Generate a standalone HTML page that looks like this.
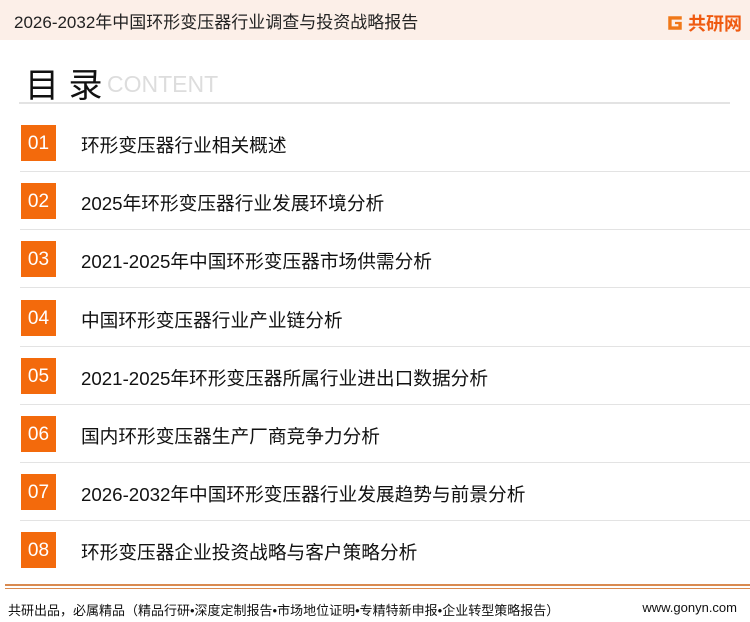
<!DOCTYPE html>
<html><head><meta charset="utf-8"><style>
*{margin:0;padding:0;box-sizing:border-box}
body{width:750px;height:622px;overflow:hidden;background:#fff;font-family:"Liberation Sans","Noto Sans CJK SC",sans-serif;position:relative;color:#111}
.hdr{position:absolute;left:0;top:0;width:750px;height:40px;background:#fcefe8}
.hdr .t{position:absolute;left:14px;top:8px;font-size:17px;color:#222}
.logo{position:absolute;left:666px;top:10px;display:flex;align-items:center}
.logo span{font-size:18px;font-weight:bold;color:#ef5a10;margin-left:4px}
.h1{position:absolute;left:25px;top:58px;font-size:34px;color:#111;white-space:pre}
.ce{position:absolute;left:107px;top:71px;font-size:23px;color:#ddd}
.hl{position:absolute;left:19px;top:102px;width:711px;height:2px;background:#e3e3e3}
.item{position:absolute;left:0;width:750px}
.box{position:absolute;left:21px;top:0;width:35px;height:36px;background:#f36a0c;color:#fff;font-size:19px;text-align:center;line-height:38px}
.txt{position:absolute;left:81px;top:6px;font-size:18.7px;color:#111;white-space:nowrap}
.sep{position:absolute;left:20px;width:730px;height:1px;background:#e3e3e3}
.fl1{position:absolute;left:5px;top:584px;width:745px;height:2px;background:#d98a50}
.fl2{position:absolute;left:5px;top:588px;width:745px;height:1px;background:#d98a50}
.ft{position:absolute;left:8px;top:600px;font-size:13px;color:#111}
.fr{position:absolute;right:13px;top:600px;font-size:13px;color:#111}
</style></head><body>
<div class="hdr"><div class="t">2026-2032年中国环形变压器行业调查与投资战略报告</div>
<div class="logo"><svg width="18" height="18" viewBox="0 0 16 16"><path d="M2 2h12v3H5v6h6V9H8V7h6v7H2z" fill="#f07818"/></svg><span>共研网</span></div></div>
<div class="h1">目 录</div><div class="ce">CONTENT</div>
<div class="hl"></div>

<div class="item" style="top:125px"><div class="box">01</div><div class="txt">环形变压器行业相关概述</div></div>
<div class="sep" style="top:171px"></div>
<div class="item" style="top:183px"><div class="box">02</div><div class="txt">2025年环形变压器行业发展环境分析</div></div>
<div class="sep" style="top:229px"></div>
<div class="item" style="top:241px"><div class="box">03</div><div class="txt">2021-2025年中国环形变压器市场供需分析</div></div>
<div class="sep" style="top:287px"></div>
<div class="item" style="top:300px"><div class="box">04</div><div class="txt">中国环形变压器行业产业链分析</div></div>
<div class="sep" style="top:346px"></div>
<div class="item" style="top:358px"><div class="box">05</div><div class="txt">2021-2025年环形变压器所属行业进出口数据分析</div></div>
<div class="sep" style="top:404px"></div>
<div class="item" style="top:416px"><div class="box">06</div><div class="txt">国内环形变压器生产厂商竞争力分析</div></div>
<div class="sep" style="top:462px"></div>
<div class="item" style="top:474px"><div class="box">07</div><div class="txt">2026-2032年中国环形变压器行业发展趋势与前景分析</div></div>
<div class="sep" style="top:520px"></div>
<div class="item" style="top:532px"><div class="box">08</div><div class="txt">环形变压器企业投资战略与客户策略分析</div></div>

<div class="fl1"></div><div class="fl2"></div>
<div class="ft">共研出品，必属精品（精品行研•深度定制报告•市场地位证明•专精特新申报•企业转型策略报告）</div>
<div class="fr">www.gonyn.com</div>
</body></html>
